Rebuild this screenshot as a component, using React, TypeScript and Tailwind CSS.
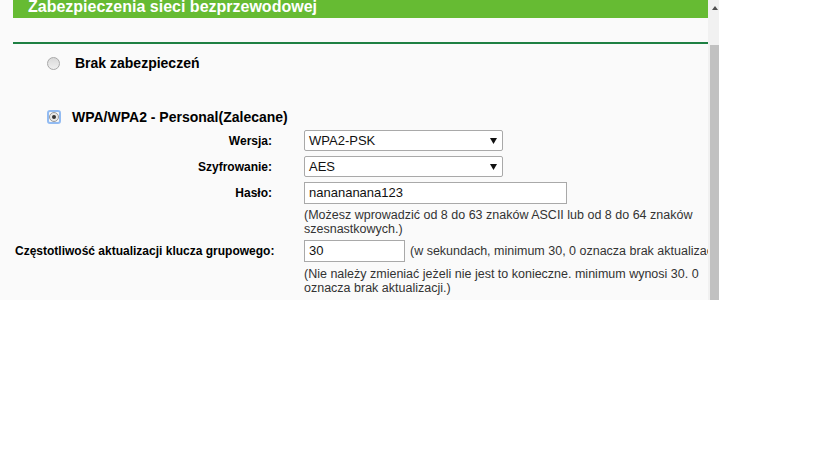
import React from "react";

// Small drop-down look-alike (static, like the router page)
function FakeSelect({ value }: { value: string }) {
  return (
    <div className="flex h-[21px] w-[199px] items-center justify-between rounded-[2px] border border-[#a9a9a9] bg-white pl-[4px] pr-[5px] text-[13px] text-[#111]">
      <span>{value}</span>
      <svg width="7" height="6" viewBox="0 0 7 6">
        <polygon points="0,0 7,0 3.5,6" fill="#111" />
      </svg>
    </div>
  );
}

function TextBox({ value, width }: { value: string; width: string }) {
  return (
    <div
      className={`flex h-[22px] items-center border border-[#a9a9a9] bg-white pl-[4px] text-[13px] text-[#111] ${width}`}
    >
      {value}
    </div>
  );
}

function FormRow({ label, children, mt }: { label: string; children: React.ReactNode; mt: string }) {
  return (
    <div className={`flex items-center ${mt}`}>
      <div className="w-[272px] shrink-0 text-right text-[12px] font-bold text-black">{label}</div>
      <div className="ml-[32px] flex items-center">{children}</div>
    </div>
  );
}

export default function App() {
  return (
    <div className="h-[460px] w-[819px] bg-white" style={{ fontFamily: '"Liberation Sans", Arial, sans-serif' }}>
      <div className="flex h-[300px] w-[719px]">
        {/* main page area */}
        <div className="w-[708px] shrink-0 overflow-hidden bg-[#fafafa]">
          <div className="ml-[13px] h-[18px] overflow-hidden bg-[#66bb33] pl-[15px] text-[16px] font-bold leading-[14px] text-white whitespace-nowrap">
            Zabezpieczenia sieci bezprzewodowej
          </div>
          <div className="ml-[13px] mt-[24px] h-[2px] bg-[#1e8043]" />

          {/* no security */}
          <div className="mt-[9px] flex h-[20px] items-center pl-[47px]">
            <div className="h-[13px] w-[13px] rounded-full border border-[#a8a8a8] bg-gradient-to-b from-[#d9d9d9] to-[#efefef]" />
            <span className="ml-[15px] text-[14px] font-bold text-black">Brak zabezpieczeń</span>
          </div>

          {/* WPA personal */}
          <div className="mt-[34px] flex h-[20px] items-center pl-[47px]">
            <div className="flex h-[14px] w-[14px] items-center justify-center rounded-[3px] border-2 border-[#92bbf2]">
              <div className="flex h-[10px] w-[10px] items-center justify-center rounded-full border border-[#9a9a9a] bg-[#e8e8e8]">
                <div className="h-[4px] w-[4px] rounded-full bg-[#333]" />
              </div>
            </div>
            <span className="ml-[11px] text-[14px] font-bold text-black">WPA/WPA2 - Personal(Zalecane)</span>
          </div>

          <FormRow label="Wersja:" mt="mt-[3px]">
            <FakeSelect value="WPA2-PSK" />
          </FormRow>
          <FormRow label="Szyfrowanie:" mt="mt-[5px]">
            <FakeSelect value="AES" />
          </FormRow>
          <FormRow label="Hasło:" mt="mt-[5px]">
            <TextBox value="nanananana123" width="w-[263px]" />
          </FormRow>
          <div className="mt-[4px] pl-[304px] text-[12.5px] leading-[14px] text-[#333] whitespace-nowrap">
            (Możesz wprowadzić od 8 do 63 znaków ASCII lub od 8 do 64 znaków
            <br />
            szesnastkowych.)
          </div>

          <div className="mt-[4px] flex items-center">
            <div className="w-[272px] shrink-0 pl-[15px] text-[12px] font-bold text-black whitespace-nowrap">
              Częstotliwość aktualizacji klucza grupowego:
            </div>
            <div className="ml-[32px] flex items-center whitespace-nowrap">
              <TextBox value="30" width="w-[101px]" />
              <span className="ml-[5px] text-[12.5px] text-[#333]">
                (w sekundach, minimum 30, 0 oznacza brak aktualizacji)
              </span>
            </div>
          </div>
          <div className="mt-[5px] pl-[304px] text-[12.5px] leading-[14px] text-[#333] whitespace-nowrap">
            (Nie należy zmieniać jeżeli nie jest to konieczne. minimum wynosi 30. 0
            <br />
            oznacza brak aktualizacji.)
          </div>
        </div>

        {/* scrollbar */}
        <div className="flex w-[11px] shrink-0 flex-col bg-[#f1f1f1]">
          <div className="flex h-[15px] items-center justify-center pl-[2px]">
            <svg width="6" height="4" viewBox="0 0 6 4">
              <polygon points="3,0 6,4 0,4" fill="#505050" />
            </svg>
          </div>
          <div className="ml-[2px] mt-[30px] w-[9px] flex-1 bg-[#c1c1c1]" />
        </div>
      </div>
    </div>
  );
}
